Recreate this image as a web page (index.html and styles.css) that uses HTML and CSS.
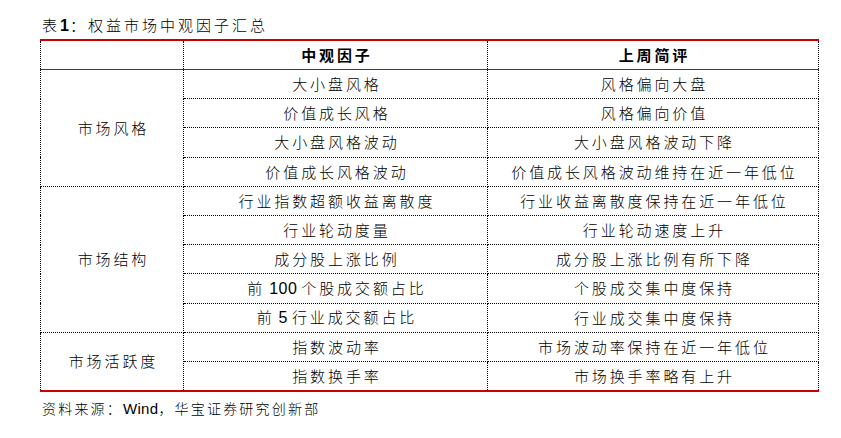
FILE: index.html
```html
<!DOCTYPE html>
<html lang="zh-CN">
<head>
<meta charset="utf-8">
<title>表1：权益市场中观因子汇总</title>
<link rel="stylesheet" href="styles.css">
</head>
<body>
<div class="page">
  <div class="caption">表<b class="num">1</b>：权益市场中观因子汇总</div>
  <table class="factors">
    <colgroup>
      <col class="c1">
      <col class="c2">
      <col class="c3">
    </colgroup>
    <thead>
      <tr>
        <th></th>
        <th>中观因子</th>
        <th>上周简评</th>
      </tr>
    </thead>
    <tbody>
      <tr class="sec">
        <td class="group" rowspan="4">市场风格</td>
        <td>大小盘风格</td>
        <td>风格偏向大盘</td>
      </tr>
      <tr><td>价值成长风格</td><td>风格偏向价值</td></tr>
      <tr><td>大小盘风格波动</td><td>大小盘风格波动下降</td></tr>
      <tr><td>价值成长风格波动</td><td>价值成长风格波动维持在近一年低位</td></tr>
      <tr class="sec">
        <td class="group" rowspan="5">市场结构</td>
        <td>行业指数超额收益离散度</td>
        <td>行业收益离散度保持在近一年低位</td>
      </tr>
      <tr><td>行业轮动度量</td><td>行业轮动速度上升</td></tr>
      <tr><td>成分股上涨比例</td><td>成分股上涨比例有所下降</td></tr>
      <tr><td>前<span class="lat"> 100 </span>个股成交额占比</td><td>个股成交集中度保持</td></tr>
      <tr><td>前<span class="lat"> 5 </span>行业成交额占比</td><td>行业成交集中度保持</td></tr>
      <tr class="sec">
        <td class="group" rowspan="2">市场活跃度</td>
        <td>指数波动率</td>
        <td>市场波动率保持在近一年低位</td>
      </tr>
      <tr><td>指数换手率</td><td>市场换手率略有上升</td></tr>
    </tbody>
  </table>
  <div class="source">资料来源：<span class="lat">Wind</span>，华宝证券研究创新部</div>
</div>
</body>
</html>
```

FILE: styles.css
```css
html, body {
  margin: 0;
  padding: 0;
  background: #ffffff;
}

body {
  font-family: "Noto Sans CJK SC", "Noto Sans", sans-serif;
  color: #000000;
  font-size: 15px;
}

.page {
  width: 841px;
  padding: 15px 0 0 40px;
  box-sizing: border-box;
}

.caption {
  height: 24px;
  line-height: 20px;
  padding-left: 2px;
  font-size: 15px;
  letter-spacing: 3px;
  font-weight: 300;
}

.caption .num {
  font-family: "Liberation Sans", Arial, sans-serif;
  font-weight: bold;
  font-size: 16px;
  letter-spacing: 1px;
}

.lat {
  font-family: "Liberation Sans", Arial, sans-serif;
  font-size: 16px;
  letter-spacing: 0.5px;
  word-spacing: -1px;
}

.factors {
  width: 778px;
  border-collapse: collapse;
  table-layout: fixed;
  border-top: 2px solid #cc0000;
  border-bottom: 2px solid #cc0000;
}

.c1 { width: 143px; }
.c2 { width: 304px; }
.c3 { width: 331px; }

.factors th,
.factors td {
  padding: 0 0 0 2.9px;
  text-align: center;
  vertical-align: middle;
  letter-spacing: 2.9px;
  font-size: 15px;
  line-height: 20px;
  border-left: 1px dotted #000000;
  border-right: 1px dotted #000000;
  border-bottom: 1px dotted #000000;
  white-space: nowrap;
}

.factors td {
  height: 28.2px;
  font-weight: 300;
}

.factors th {
  height: 28px;
  font-weight: bold;
  border-bottom: 1px solid #cc0000;
}

.factors tr.sec td {
  border-top: 1px dotted #000000;
}

.source {
  padding: 6px 0 0 2px;
  font-size: 14px;
  line-height: 20px;
  letter-spacing: 2.2px;
  font-weight: 300;
}

.source .lat {
  font-size: 15px;
  letter-spacing: 0.3px;
}
```
